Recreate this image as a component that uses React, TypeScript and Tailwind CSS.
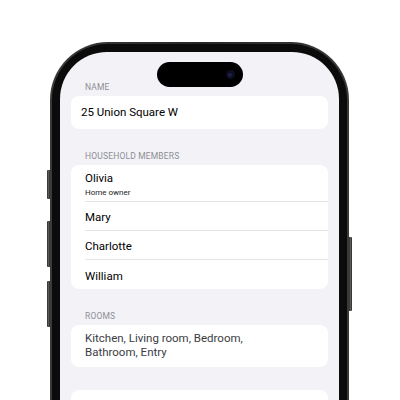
const members = [
  { name: 'Olivia', role: 'Home owner' },
  { name: 'Mary' },
  { name: 'Charlotte' },
  { name: 'William' },
]

function SectionLabel({ children }: { children: string }) {
  return (
    <div className="h-[10px] leading-[10px] pl-[14px] mb-[4px] text-[8.5px] tracking-[0.02em] text-[#8e8e93]">
      {children}
    </div>
  )
}

function Island() {
  return (
    <div className="absolute left-1/2 top-[10px] -translate-x-1/2 w-[86px] h-[25px] rounded-full bg-black flex items-center justify-end pr-[8px]">
      <div className="w-[9px] h-[9px] rounded-full bg-[#0d0d1f] flex items-center justify-center">
        <div className="w-[4px] h-[4px] rounded-full bg-[#1c1f48]" />
      </div>
    </div>
  )
}

function SideButton({ className }: { className: string }) {
  return <div className={'absolute w-[3px] bg-gradient-to-r from-[#2a2a2a] via-[#5a5a5a] to-[#2a2a2a] ' + className} />
}

export default function App() {
  return (
    <div
      className="w-[400px] h-[400px] overflow-hidden bg-white pt-[42px] pl-[50px]"
      style={{ fontFamily: 'Roboto, "Noto Sans", sans-serif' }}
    >
      <div className="relative w-[299px]">
        <SideButton className="-left-[3px] top-[128px] h-[29px] rounded-l-[1px]" />
        <SideButton className="-left-[3px] top-[179px] h-[46px] rounded-l-[1px]" />
        <SideButton className="-left-[3px] top-[239px] h-[46px] rounded-l-[1px]" />
        <SideButton className="-right-[3px] top-[195px] h-[74px] rounded-r-[1px]" />

        <div className="rounded-t-[58px] bg-gradient-to-r from-[#3a3a3a] via-[#262626] to-[#3a3a3a] p-[2px] pb-0">
          <div className="rounded-t-[56px] bg-[#0b0b0b] p-[8px] pb-0">
            <div className="relative h-[400px] rounded-t-[47px] bg-[#f2f2f7] px-[11px] pt-[30px] overflow-hidden">
              <Island />

              <SectionLabel>NAME</SectionLabel>
              <div className="h-[33px] rounded-[8px] bg-white pl-[10px] pt-[1px] flex items-center text-[11.5px] text-black">
                25 Union Square W
              </div>

              <div className="h-[22px]" />
              <SectionLabel>HOUSEHOLD MEMBERS</SectionLabel>
              <div className="rounded-[8px] bg-white flex flex-col">
                {members.map((m, i) => (
                  <div key={m.name} className="pl-[14px]">
                    <div
                      className={
                        (m.role ? 'h-[37px] pt-[6px] ' : 'h-[29px] flex items-center pt-[3px] ') +
                        (i < members.length - 1 ? 'border-b border-[#e3e3e8]' : '')
                      }
                    >
                      <div className="text-[11.5px] leading-[15px] text-black">{m.name}</div>
                      {m.role && (
                        <div className="text-[8px] leading-[12px] mt-[1px] text-[#1c1c1e]">{m.role}</div>
                      )}
                    </div>
                  </div>
                ))}
              </div>

              <div className="h-[22px]" />
              <SectionLabel>ROOMS</SectionLabel>
              <div className="rounded-[8px] bg-white pl-[14px] pt-[6px] pb-[8px] text-[11.5px] leading-[14px] text-[#3c3c43]">
                Kitchen, Living room, Bedroom,
                <br />
                Bathroom, Entry
              </div>

              <div className="h-[23px]" />
              <div className="h-[40px] rounded-[8px] bg-white" />
            </div>
          </div>
        </div>
      </div>
    </div>
  )
}
